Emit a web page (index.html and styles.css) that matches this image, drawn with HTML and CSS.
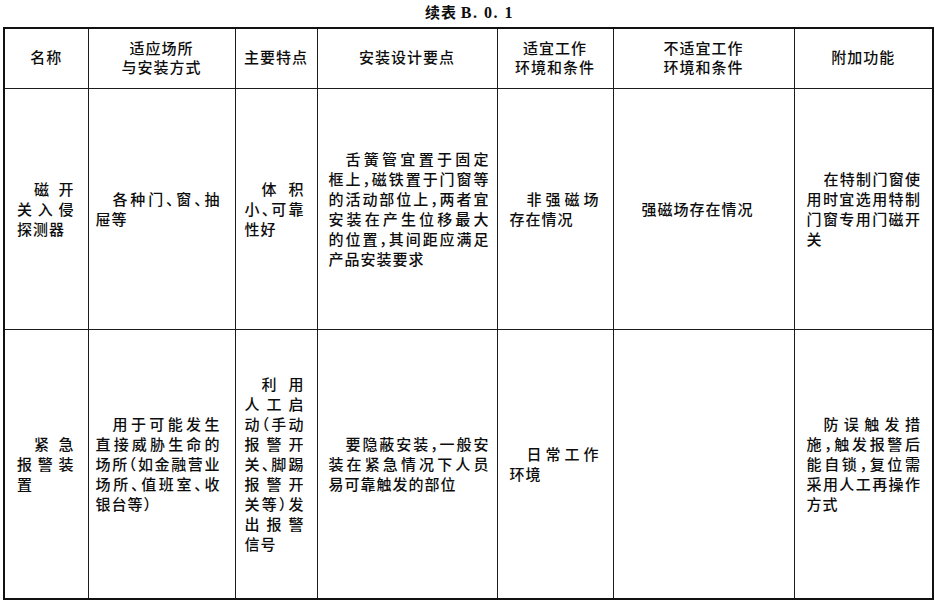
FILE: index.html
```html
<!DOCTYPE html>
<html lang="zh-CN">
<head>
<meta charset="utf-8">
<title>续表 B.0.1</title>
<link rel="stylesheet" href="styles.css">
</head>
<body>
<div class="page">
  <div class="title"><span class="title-cn">续表</span> <span class="title-no">B. 0. 1</span></div>
  <table class="spec">
    <colgroup>
      <col class="w1"><col class="w2"><col class="w3"><col class="w4"><col class="w5"><col class="w6"><col class="w7">
    </colgroup>
    <thead>
      <tr class="head">
        <th>名称</th>
        <th><span class="hl">适应场所</span><span class="hl">与安装方式</span></th>
        <th>主要特点</th>
        <th>安装设计要点</th>
        <th><span class="hl">适宜工作</span><span class="hl">环境和条件</span></th>
        <th><span class="hl">不适宜工作</span><span class="hl">环境和条件</span></th>
        <th>附加功能</th>
      </tr>
    </thead>
    <tbody>
      <tr class="row1">
        <td><span class="l f">磁开</span><span class="l">关入侵</span><span class="l e">探测器</span></td>
        <td><span class="l f">各种门、窗、抽</span><span class="l e">屉等</span></td>
        <td><span class="l f">体积</span><span class="l">小、可靠</span><span class="l e">性好</span></td>
        <td><span class="l f">舌簧管宜置于固定</span><span class="l">框上，磁铁置于门窗等</span><span class="l">的活动部位上，两者宜</span><span class="l">安装在产生位移最大</span><span class="l">的位置，其间距应满足</span><span class="l e">产品安装要求</span></td>
        <td><span class="l f">非强磁场</span><span class="l e">存在情况</span></td>
        <td><span class="l f e">强磁场存在情况</span></td>
        <td><span class="l f">在特制门窗使</span><span class="l">用时宜选用特制</span><span class="l">门窗专用门磁开</span><span class="l e">关</span></td>
      </tr>
      <tr class="row2">
        <td><span class="l f">紧急</span><span class="l">报警装</span><span class="l e">置</span></td>
        <td><span class="l f">用于可能发生</span><span class="l">直接威胁生命的</span><span class="l">场所（如金融营业</span><span class="l">场所、值班室、收</span><span class="l e">银台等）</span></td>
        <td><span class="l f">利用</span><span class="l">人工启</span><span class="l">动（手动</span><span class="l">报警开</span><span class="l">关、脚踢</span><span class="l">报警开</span><span class="l">关等）发</span><span class="l">出报警</span><span class="l e">信号</span></td>
        <td><span class="l f">要隐蔽安装，一般安</span><span class="l">装在紧急情况下人员</span><span class="l e">易可靠触发的部位</span></td>
        <td><span class="l f">日常工作</span><span class="l e">环境</span></td>
        <td></td>
        <td><span class="l f">防误触发措</span><span class="l">施，触发报警后</span><span class="l">能自锁，复位需</span><span class="l">采用人工再操作</span><span class="l e">方式</span></td>
      </tr>
    </tbody>
  </table>
</div>
</body>
</html>
```

FILE: styles.css
```css
html, body {
  margin: 0;
  padding: 0;
  background: #ffffff;
}

.page {
  width: 935px;
  height: 603px;
  overflow: hidden;
  color: #0d0d0d;
  font-family: "Noto Sans CJK SC", "Noto Sans", sans-serif;
}

.title {
  height: 27px;
  line-height: 22px;
  text-align: center;
  padding-left: 4px;
  font-weight: 700;
  white-space: nowrap;
}

.title-cn {
  font-size: 15px;
  letter-spacing: 1px;
  font-family: "Noto Sans CJK SC", sans-serif;
}

.title-no {
  font-size: 16px;
  letter-spacing: 1.5px;
  font-family: "Liberation Serif", "Times New Roman", serif;
}

.spec {
  margin-left: 3px;
  width: 929px;
  table-layout: fixed;
  border-collapse: collapse;
  border: 2px solid #111111;
  font-size: 15px;
  font-weight: 500;
  letter-spacing: 1px;
  font-feature-settings: "halt";
}

.w1 { width: 84px; }
.w2 { width: 147px; }
.w3 { width: 82px; }
.w4 { width: 180px; }
.w5 { width: 116px; }
.w6 { width: 181px; }
.w7 { width: 139px; }

.spec th,
.spec td {
  border: 1px solid #1c1c1c;
  vertical-align: middle;
}

.spec th {
  font-weight: 500;
  line-height: 19px;
  text-align: center;
  padding: 0 0 3px 0;
}

.hl {
  display: block;
  height: 19px;
}

.head { height: 60px; }
.row1 { height: 241px; }
.row2 { height: 270px; }

.spec td {
  line-height: 20px;
  padding: 0 12px;
}

.l {
  display: block;
  text-align: justify;
  text-align-last: justify;
  white-space: nowrap;
}

.l.f { text-indent: 17px; }
.l.e { text-align-last: left; text-align: left; }

.spec td:nth-child(1) { padding-left: 12px; padding-right: 13px; }
.spec td:nth-child(2) { padding-left: 7px; padding-right: 14px; }
.spec td:nth-child(3) { padding-left: 9px; padding-right: 12px; }
.spec td:nth-child(4) { padding-left: 11px; padding-right: 7px; }
.spec td:nth-child(5) { padding-left: 12px; padding-right: 13px; }
.spec td:nth-child(6) { padding-left: 12px; padding-right: 12px; }
.spec td:nth-child(7) { padding-left: 12px; padding-right: 11px; }

.spec td:nth-child(6) .l.f { text-indent: 16px; }
```
